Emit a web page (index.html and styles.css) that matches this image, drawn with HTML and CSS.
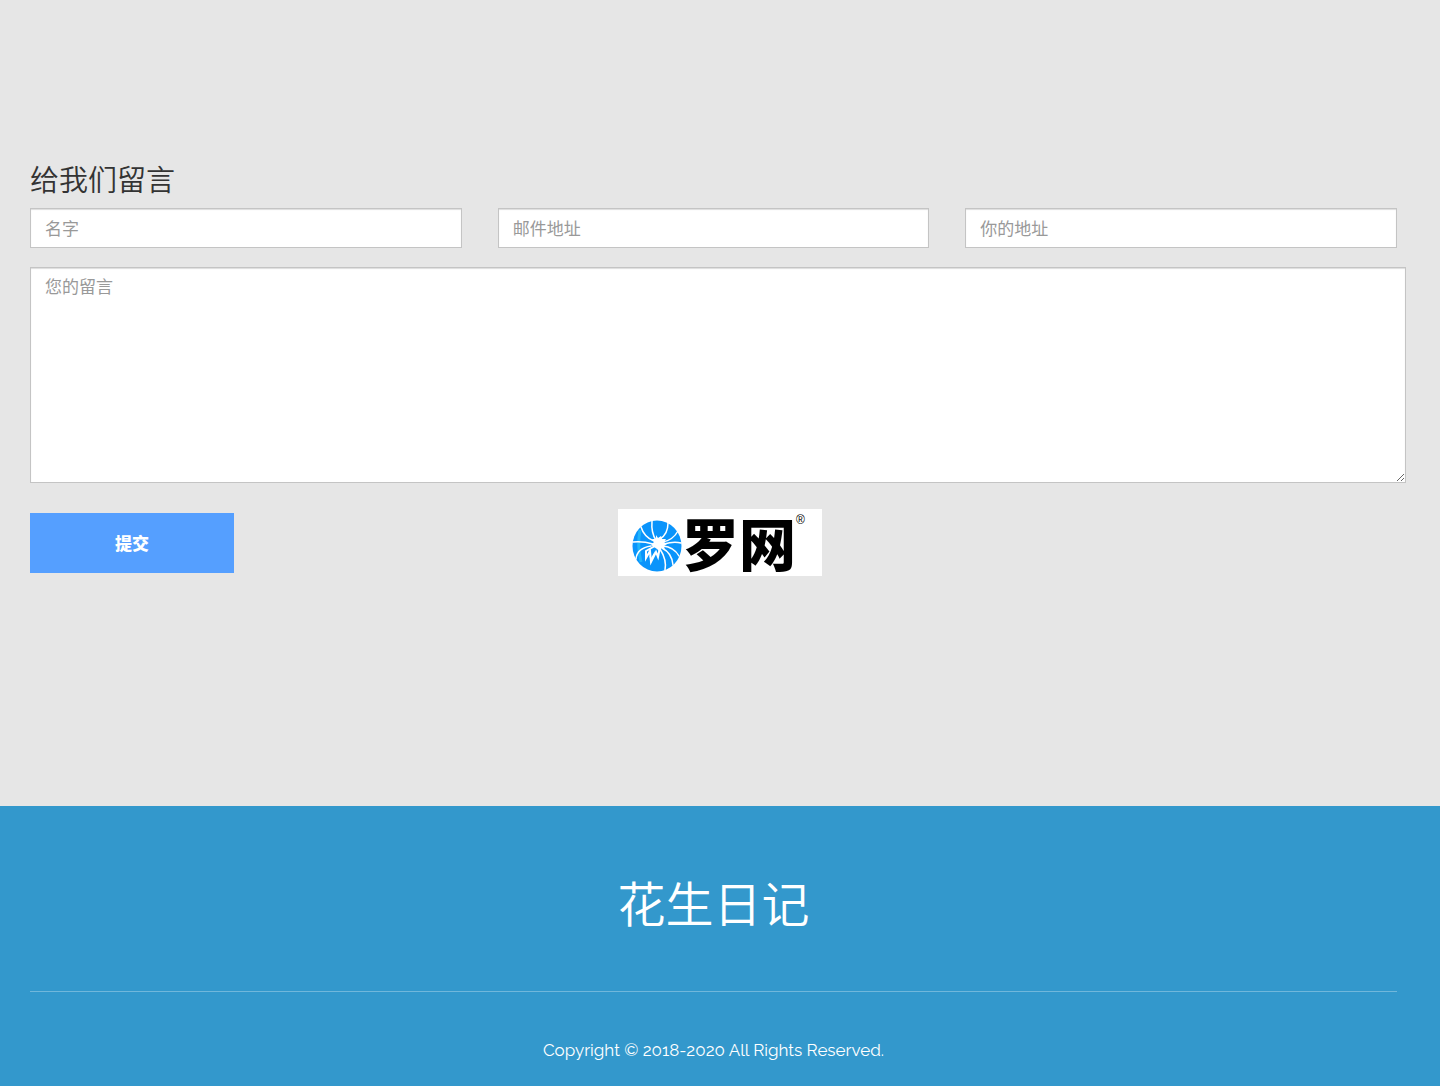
FILE: index.html
```html
<!DOCTYPE html>
<html lang="zh-CN">
<head>
<meta charset="utf-8">
<meta name="viewport" content="width=device-width, initial-scale=1">
<title>花生日记</title>
<link rel="stylesheet" href="styles.css">
</head>
<body>
<main class="contact">
  <h1 class="contact-title">给我们留言</h1>
  <form class="contact-form">
    <div class="fields">
      <input class="control" type="text" name="name" placeholder="名字" aria-label="名字">
      <input class="control" type="email" name="email" placeholder="邮件地址" aria-label="邮件地址">
      <input class="control" type="text" name="address" placeholder="你的地址" aria-label="你的地址">
    </div>
    <textarea class="control message" name="message" placeholder="您的留言" aria-label="您的留言"></textarea>
    <div class="actions">
      <button class="submit" type="submit">提交</button>
      <div class="partner">
        <svg class="partner-mark" viewBox="0 0 50 52" aria-hidden="true">
          <ellipse cx="25" cy="26" rx="24.500" ry="25.500" fill="#0a94fb"/>
          <path d="M8 10Q5 26 9 42" fill="none" stroke="#20b4fb" stroke-width="3"/>
          <g fill="none" stroke="#fff" stroke-width="1.500" stroke-linecap="round">
            <path d="M24 20Q19 13 20 1"/>
            <path d="M22 21Q12 17 9 7"/>
            <path d="M21 24Q11 21 1 22"/>
            <path d="M19 26Q5 28 4 39"/>
            <path d="M28 19Q36 14 36 3"/>
            <path d="M31 22Q41 20 46 11"/>
            <path d="M32 24Q42 21 49 23"/>
            <path d="M31 26Q42 27 47 36"/>
            <path d="M30 28Q40 33 41 45"/>
            <path d="M28 29Q35 40 33 50"/>
          </g>
          <path d="M24 15L26 18L29 16L30 19L34 19L32 22L35 24L32 26L33 30L29 28L28 32L25 29L22 27L19 25L22 22L20 19L24 19Z" fill="#fff"/>
          <path d="M23 26L14 31L14 38L18 31L19 42L24 32L26 37L28 27" fill="none" stroke="#fff" stroke-width="2"/>
          <path d="M19 42L17 35L19 38L23 31L22 37Z" fill="#fff"/>
        </svg>
        <span class="partner-name">罗网</span>
        <sup class="partner-reg">®</sup>
      </div>
    </div>
  </form>
</main>
<footer class="footer">
  <h2 class="footer-title">花生日记</h2>
  <p class="copyright">Copyright © 2018-2020 All Rights Reserved.</p>
</footer>
</body>
</html>
```
FILE: styles.css
```css
* {
  box-sizing: border-box;
}

body {
  margin: 0;
  background: #e6e6e6;
  color: #333;
  font-family: "Noto Sans CJK SC", sans-serif;
  font-size: 17px;
  line-height: 24px;
}

.contact {
  padding: 158px 30px 230px;
}

.contact-title {
  margin: 0 0 10px;
  font-size: 29px;
  font-weight: 350;
  line-height: 40px;
}

.fields {
  display: grid;
  grid-template-columns: repeat(3, 1fr);
  gap: 36px;
  margin: 0 13px 19px 0;
}

.control {
  display: block;
  width: 100%;
  height: 40px;
  padding: 6px 14px 8px;
  border: 1px solid #c4c4c4;
  border-radius: 0;
  background: #fff;
  box-shadow: inset 0 1px 1px #ddd;
  color: #555;
  font: inherit;
}

.control::placeholder {
  color: #999;
  opacity: 1;
}

.message {
  width: calc(100% - 4px);
  height: 216px;
  resize: vertical;
}

.actions {
  display: grid;
  grid-template-columns: 1fr 204px 1fr;
  align-items: center;
  margin-top: 26px;
}

.submit {
  width: 204px;
  height: 60px;
  padding: 0;
  border: 0;
  background: #559fff;
  color: #fff;
  font: inherit;
  font-weight: 900;
}

.partner {
  display: flex;
  align-items: center;
  height: 67px;
  padding-left: 14px;
  background: #fff;
  color: #000;
}

.partner-mark {
  flex: none;
  width: 50px;
  height: 52px;
  margin-top: 6px;
}

.partner-name {
  height: 67px;
  font-size: 57px;
  font-weight: 900;
  line-height: 64px;
}

.partner-reg {
  align-self: flex-start;
  font-family: "Liberation Sans", sans-serif;
  font-size: 12px;
  line-height: 22px;
}

.footer {
  padding: 60px 43px 24px 30px;
  background: #3398cc;
  color: #fff;
  text-align: center;
}

.footer-title {
  margin: 0;
  padding-bottom: 55px;
  border-bottom: 1px solid #70b7db;
  font-size: 48px;
  font-weight: 350;
  line-height: 70px;
}

.copyright {
  margin: 46px 0 0;
  font-family: Raleway, Lato, sans-serif;
}
```
